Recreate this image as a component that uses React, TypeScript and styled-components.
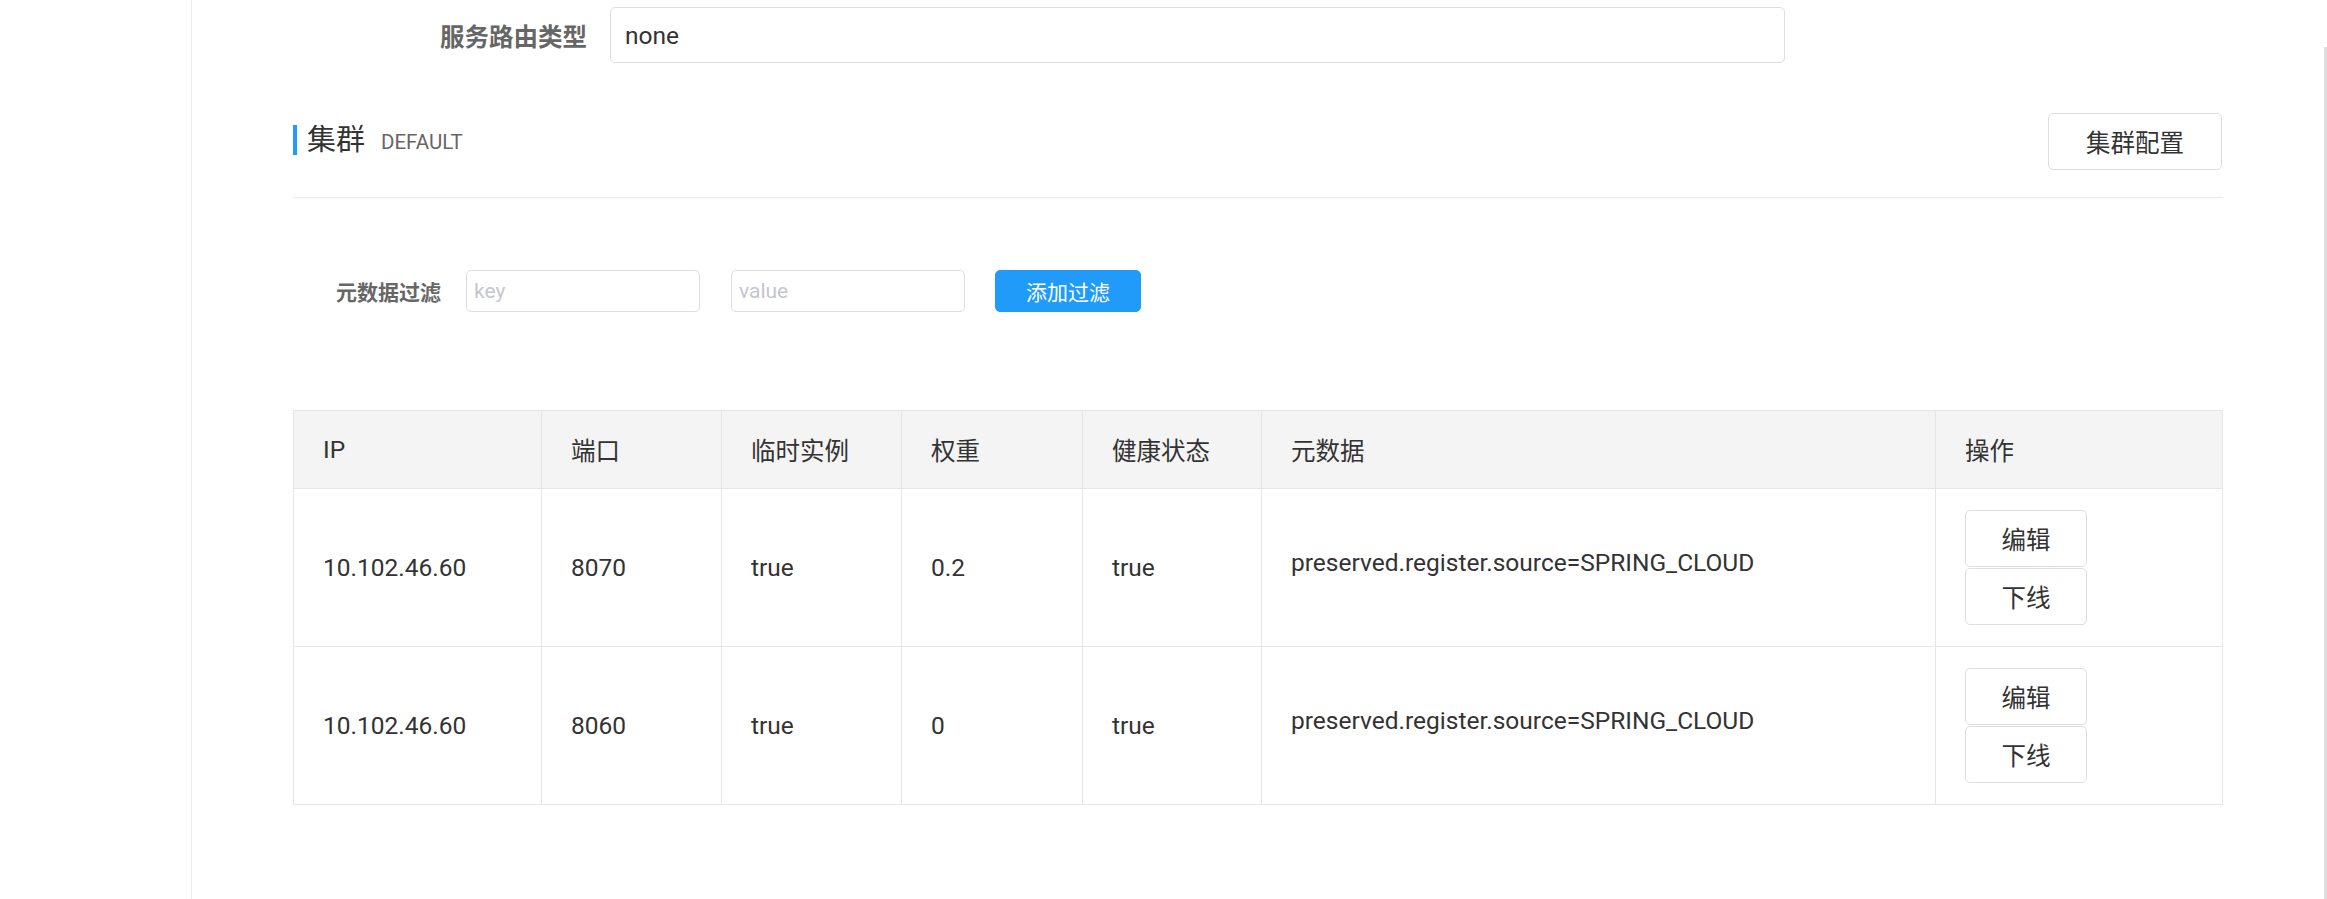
import React from "react";
import styled, { createGlobalStyle } from "styled-components";

const GlobalStyle = createGlobalStyle`
  html, body {
    margin: 0;
    padding: 0;
    background: #fff;
  }
  body {
    font-family: Roboto, "Noto Sans CJK SC", sans-serif;
    color: #333;
  }
  * { box-sizing: border-box; }
`;

const Shell = styled.div`
  display: flex;
  width: 2327px;
  height: 899px;
  overflow: hidden;
  background: #fff;
`;

const Sidebar = styled.aside`
  width: 192px;
  flex: none;
  border-right: 1px solid #ececec;
`;

const Main = styled.main`
  flex: 1;
  min-width: 0;
  padding: 7px 102px 0 101px;
`;

const ScrollTrack = styled.div`
  width: 3px;
  flex: none;
  margin-top: 47px;
  background: #dedede;
`;

const FormRow = styled.div`
  display: flex;
  align-items: center;
  gap: 23px;
`;

const FormLabel = styled.label`
  width: 294px;
  text-align: right;
  font-size: 24.5px;
  font-weight: 700;
  color: #666;
`;

const TextInput = styled.input<{ $w: number; $h: number; $fs: number; $px: number }>`
  width: ${(p) => p.$w}px;
  height: ${(p) => p.$h}px;
  border: 1px solid #dcdee3;
  border-radius: 5px;
  padding: 0 ${(p) => p.$px}px;
  font-family: Roboto, "Noto Sans CJK SC", sans-serif;
  font-size: ${(p) => p.$fs}px;
  color: #333;
  background: #fff;
  outline: none;
  &::placeholder {
    color: #c4c6cf;
  }
`;

const ClusterHeader = styled.div`
  margin-top: 50px;
  display: flex;
  align-items: center;
  justify-content: space-between;
`;

const ClusterTitle = styled.div`
  display: flex;
  align-items: center;
  margin-top: -3px;
`;

const TitleBar = styled.span`
  width: 4px;
  height: 30px;
  background: #209bfa;
  margin-right: 10px;
`;

const TitleMain = styled.span`
  font-size: 29px;
  color: #333;
  line-height: 1;
`;

const TitleSub = styled.span`
  font-size: 20.5px;
  color: #666;
  margin-left: 16px;
  margin-top: 4px;
`;

const Button = styled.button<{ $primary?: boolean; $w: number; $h: number; $fs: number }>`
  width: ${(p) => p.$w}px;
  height: ${(p) => p.$h}px;
  padding: 0;
  border-radius: 5px;
  border: 1px solid ${(p) => (p.$primary ? "#209bfa" : "#dcdee3")};
  background: ${(p) => (p.$primary ? "#209bfa" : "#fff")};
  color: ${(p) => (p.$primary ? "#fff" : "#333")};
  font-family: Roboto, "Noto Sans CJK SC", sans-serif;
  font-size: ${(p) => p.$fs}px;
  cursor: pointer;
`;

const Divider = styled.hr`
  margin: 27px 0 0;
  border: 0;
  border-top: 1px solid #ebebeb;
`;

const FilterRow = styled.div`
  margin-top: 72px;
  padding-left: 43px;
  display: flex;
  align-items: center;
`;

const FilterLabel = styled.span`
  font-size: 21px;
  font-weight: 700;
  color: #666;
  margin-right: 25px;
`;

const Spacer = styled.span<{ $w: number }>`
  width: ${(p) => p.$w}px;
  flex: none;
`;

const Table = styled.table`
  margin-top: 98px;
  width: 1929px;
  table-layout: fixed;
  border-collapse: collapse;
  border: 1px solid #e6e6e6;
  font-size: 24.5px;
  color: #333;
`;

const HeadCell = styled.th`
  height: 78px;
  padding: 0 29px;
  text-align: left;
  font-weight: 400;
  background: #f4f4f4;
  border: 1px solid #e6e6e6;
`;

const Cell = styled.td<{ $lift?: boolean }>`
  height: 158px;
  padding: 0 29px ${(p) => (p.$lift ? "10px" : "0")};
  vertical-align: middle;
  border: 1px solid #e6e6e6;
  white-space: nowrap;
`;

const OpsStack = styled.div`
  display: flex;
  flex-direction: column;
  gap: 1px;
  width: 122px;
`;

const columns = [248, 180, 180, 181, 179, 674, 287];
const heads = ["IP", "端口", "临时实例", "权重", "健康状态", "元数据", "操作"];

const rows = [
  { ip: "10.102.46.60", port: "8070", ephemeral: "true", weight: "0.2", healthy: "true", meta: "preserved.register.source=SPRING_CLOUD" },
  { ip: "10.102.46.60", port: "8060", ephemeral: "true", weight: "0", healthy: "true", meta: "preserved.register.source=SPRING_CLOUD" },
];

export default function App() {
  return (
    <>
      <GlobalStyle />
      <Shell>
        <Sidebar />
        <Main>
          <FormRow>
            <FormLabel>服务路由类型</FormLabel>
            <TextInput $w={1175} $h={56} $fs={24.5} $px={14} defaultValue="none" readOnly />
          </FormRow>

          <ClusterHeader>
            <ClusterTitle>
              <TitleBar />
              <TitleMain>集群</TitleMain>
              <TitleSub>DEFAULT</TitleSub>
            </ClusterTitle>
            <Button $w={174} $h={57} $fs={24.5}>集群配置</Button>
          </ClusterHeader>
          <Divider />

          <FilterRow>
            <FilterLabel>元数据过滤</FilterLabel>
            <TextInput $w={234} $h={42} $fs={21} $px={7} placeholder="key" />
            <Spacer $w={31} />
            <TextInput $w={234} $h={42} $fs={21} $px={7} placeholder="value" />
            <Spacer $w={30} />
            <Button $primary $w={146} $h={42} $fs={21}>添加过滤</Button>
          </FilterRow>

          <Table>
            <colgroup>
              {columns.map((w, i) => (
                <col key={i} style={{ width: w }} />
              ))}
            </colgroup>
            <thead>
              <tr>
                {heads.map((h) => (
                  <HeadCell key={h}>{h}</HeadCell>
                ))}
              </tr>
            </thead>
            <tbody>
              {rows.map((r, i) => (
                <tr key={i}>
                  <Cell>{r.ip}</Cell>
                  <Cell>{r.port}</Cell>
                  <Cell>{r.ephemeral}</Cell>
                  <Cell>{r.weight}</Cell>
                  <Cell>{r.healthy}</Cell>
                  <Cell $lift>{r.meta}</Cell>
                  <Cell>
                    <OpsStack>
                      <Button $w={122} $h={57} $fs={24.5}>编辑</Button>
                      <Button $w={122} $h={57} $fs={24.5}>下线</Button>
                    </OpsStack>
                  </Cell>
                </tr>
              ))}
            </tbody>
          </Table>
        </Main>
        <ScrollTrack />
      </Shell>
    </>
  );
}
